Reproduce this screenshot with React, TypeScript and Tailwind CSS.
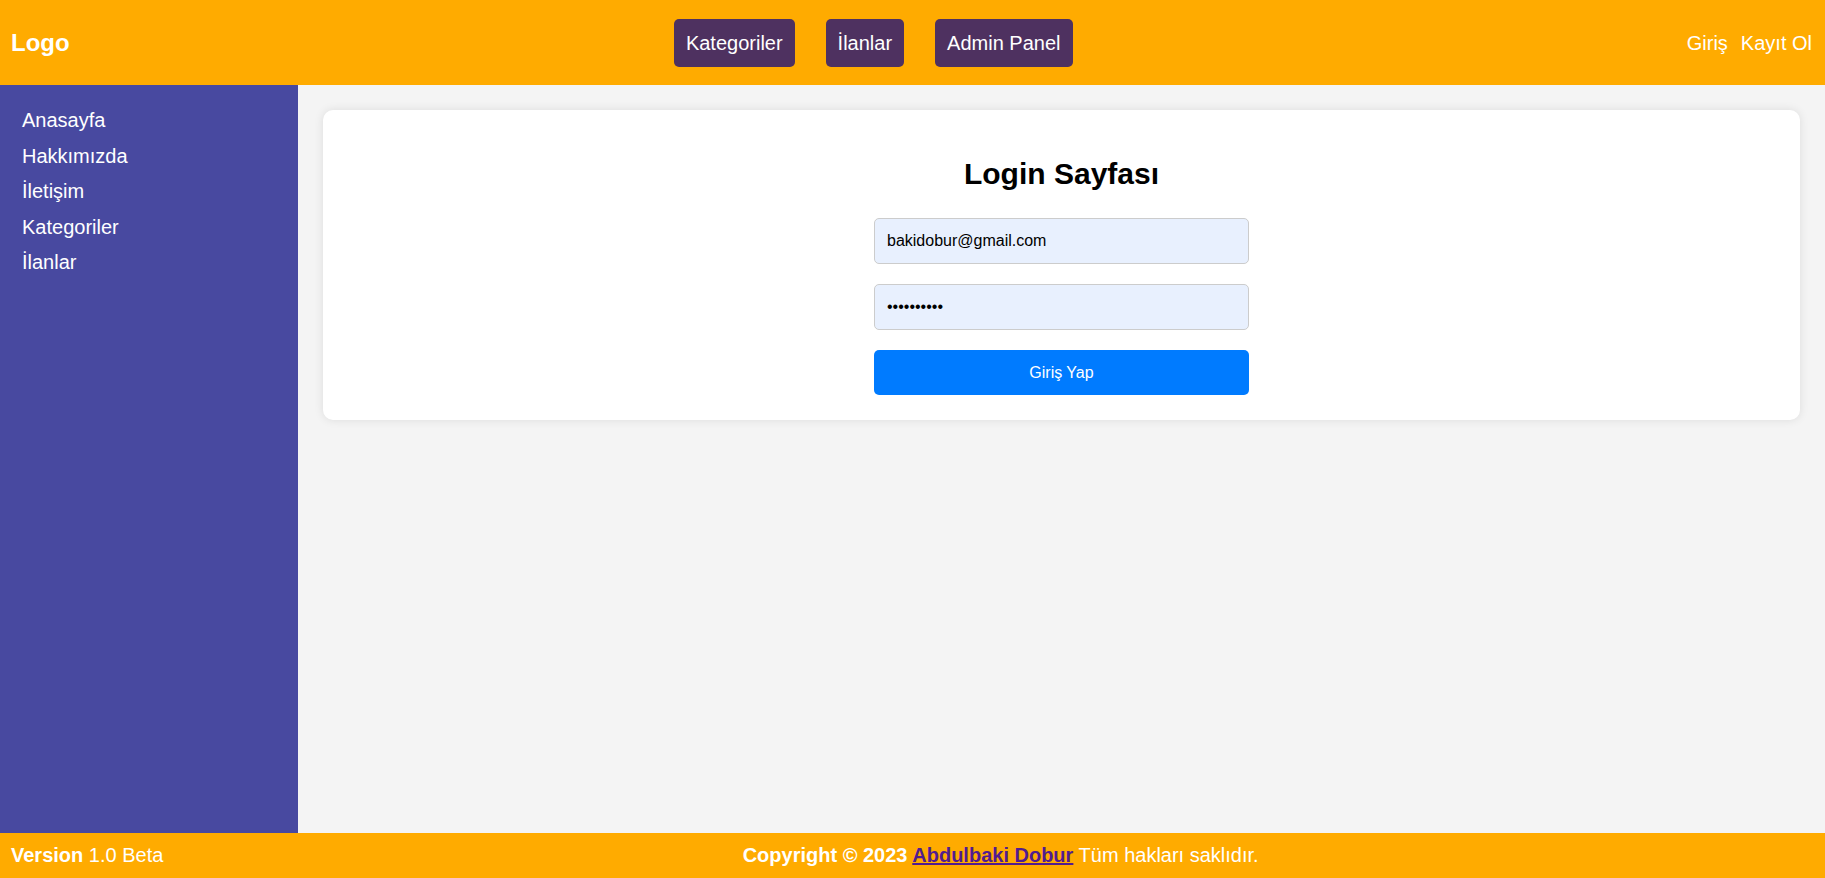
import React from 'react';

const navItems = ['Kategoriler', 'İlanlar', 'Admin Panel'];
const sideItems = ['Anasayfa', 'Hakkımızda', 'İletişim', 'Kategoriler', 'İlanlar'];

const App: React.FC = () => {
    return (
        <div className="flex flex-col h-screen w-full overflow-hidden font-['Liberation_Sans',Arial,sans-serif] text-black">
            {/* Header */}
            <header className="flex items-center justify-between h-[85px] shrink-0 bg-[#ffab00] pl-[11px] pr-[13px] text-white">
                <a href="#" className="text-[24px] font-bold leading-[28px]">Logo</a>

                <nav className="flex items-center gap-[31px] mr-[10px]">
                    {navItems.map((item) => (
                        <a
                            key={item}
                            href="#"
                            className="block px-3 py-3 text-[20px] leading-[24px] bg-[#4e3160] rounded-[5px]"
                        >
                            {item}
                        </a>
                    ))}
                </nav>

                <div className="flex items-center gap-[13px] text-[20px] leading-[24px]">
                    <a href="#">Giriş</a>
                    <a href="#">Kayıt Ol</a>
                </div>
            </header>

            <div className="flex flex-1 min-h-0">
                {/* Sidebar */}
                <aside className="w-[298px] shrink-0 bg-[#4849a0] pt-[18px] pl-[22px]">
                    <ul>
                        {sideItems.map((item, index) => (
                            <li key={`${item}-${index}`} className="text-[20px] leading-[35.5px] text-white">
                                <a href="#">{item}</a>
                            </li>
                        ))}
                    </ul>
                </aside>

                {/* Content */}
                <main className="flex-1 bg-[#f4f4f4] p-[25px]">
                    <div className="flex flex-col items-center bg-white rounded-[10px] shadow-[0_0_10px_rgba(0,0,0,0.1)] pt-[47px] pb-[25px]">
                        <h2 className="text-[30px] leading-[34px] font-bold mb-[27px]">Login Sayfası</h2>
                        <form className="flex flex-col gap-[20px] w-[375px]" onSubmit={(e) => e.preventDefault()}>
                            <input
                                type="email"
                                defaultValue="bakidobur@gmail.com"
                                className="h-[46px] w-full px-[12px] text-[16px] bg-[#e8f0fe] border border-[#cccccc] rounded-[5px] outline-none"
                            />
                            <input
                                type="password"
                                defaultValue="1234567890"
                                className="h-[46px] w-full px-[12px] text-[16px] bg-[#e8f0fe] border border-[#cccccc] rounded-[5px] outline-none"
                            />
                            <button
                                type="submit"
                                className="h-[45px] w-full bg-[#007bff] text-white text-[16px] leading-[18px] rounded-[5px]"
                            >
                                Giriş Yap
                            </button>
                        </form>
                    </div>
                </main>
            </div>

            {/* Footer */}
            <footer className="flex items-center h-[45px] shrink-0 bg-[#ffab00] pl-[11px] text-white text-[20px] leading-[23px]">
                <div>
                    <strong className="font-bold">Version</strong> 1.0 Beta
                </div>
                <div className="flex-1 text-center pl-[13px]">
                    <strong className="font-bold">Copyright © 2023 </strong>
                    <a href="#" className="font-bold text-[#521c8f] underline">Abdulbaki Dobur</a>
                    {' '}Tüm hakları saklıdır.
                </div>
            </footer>
        </div>
    );
};

export default App;
